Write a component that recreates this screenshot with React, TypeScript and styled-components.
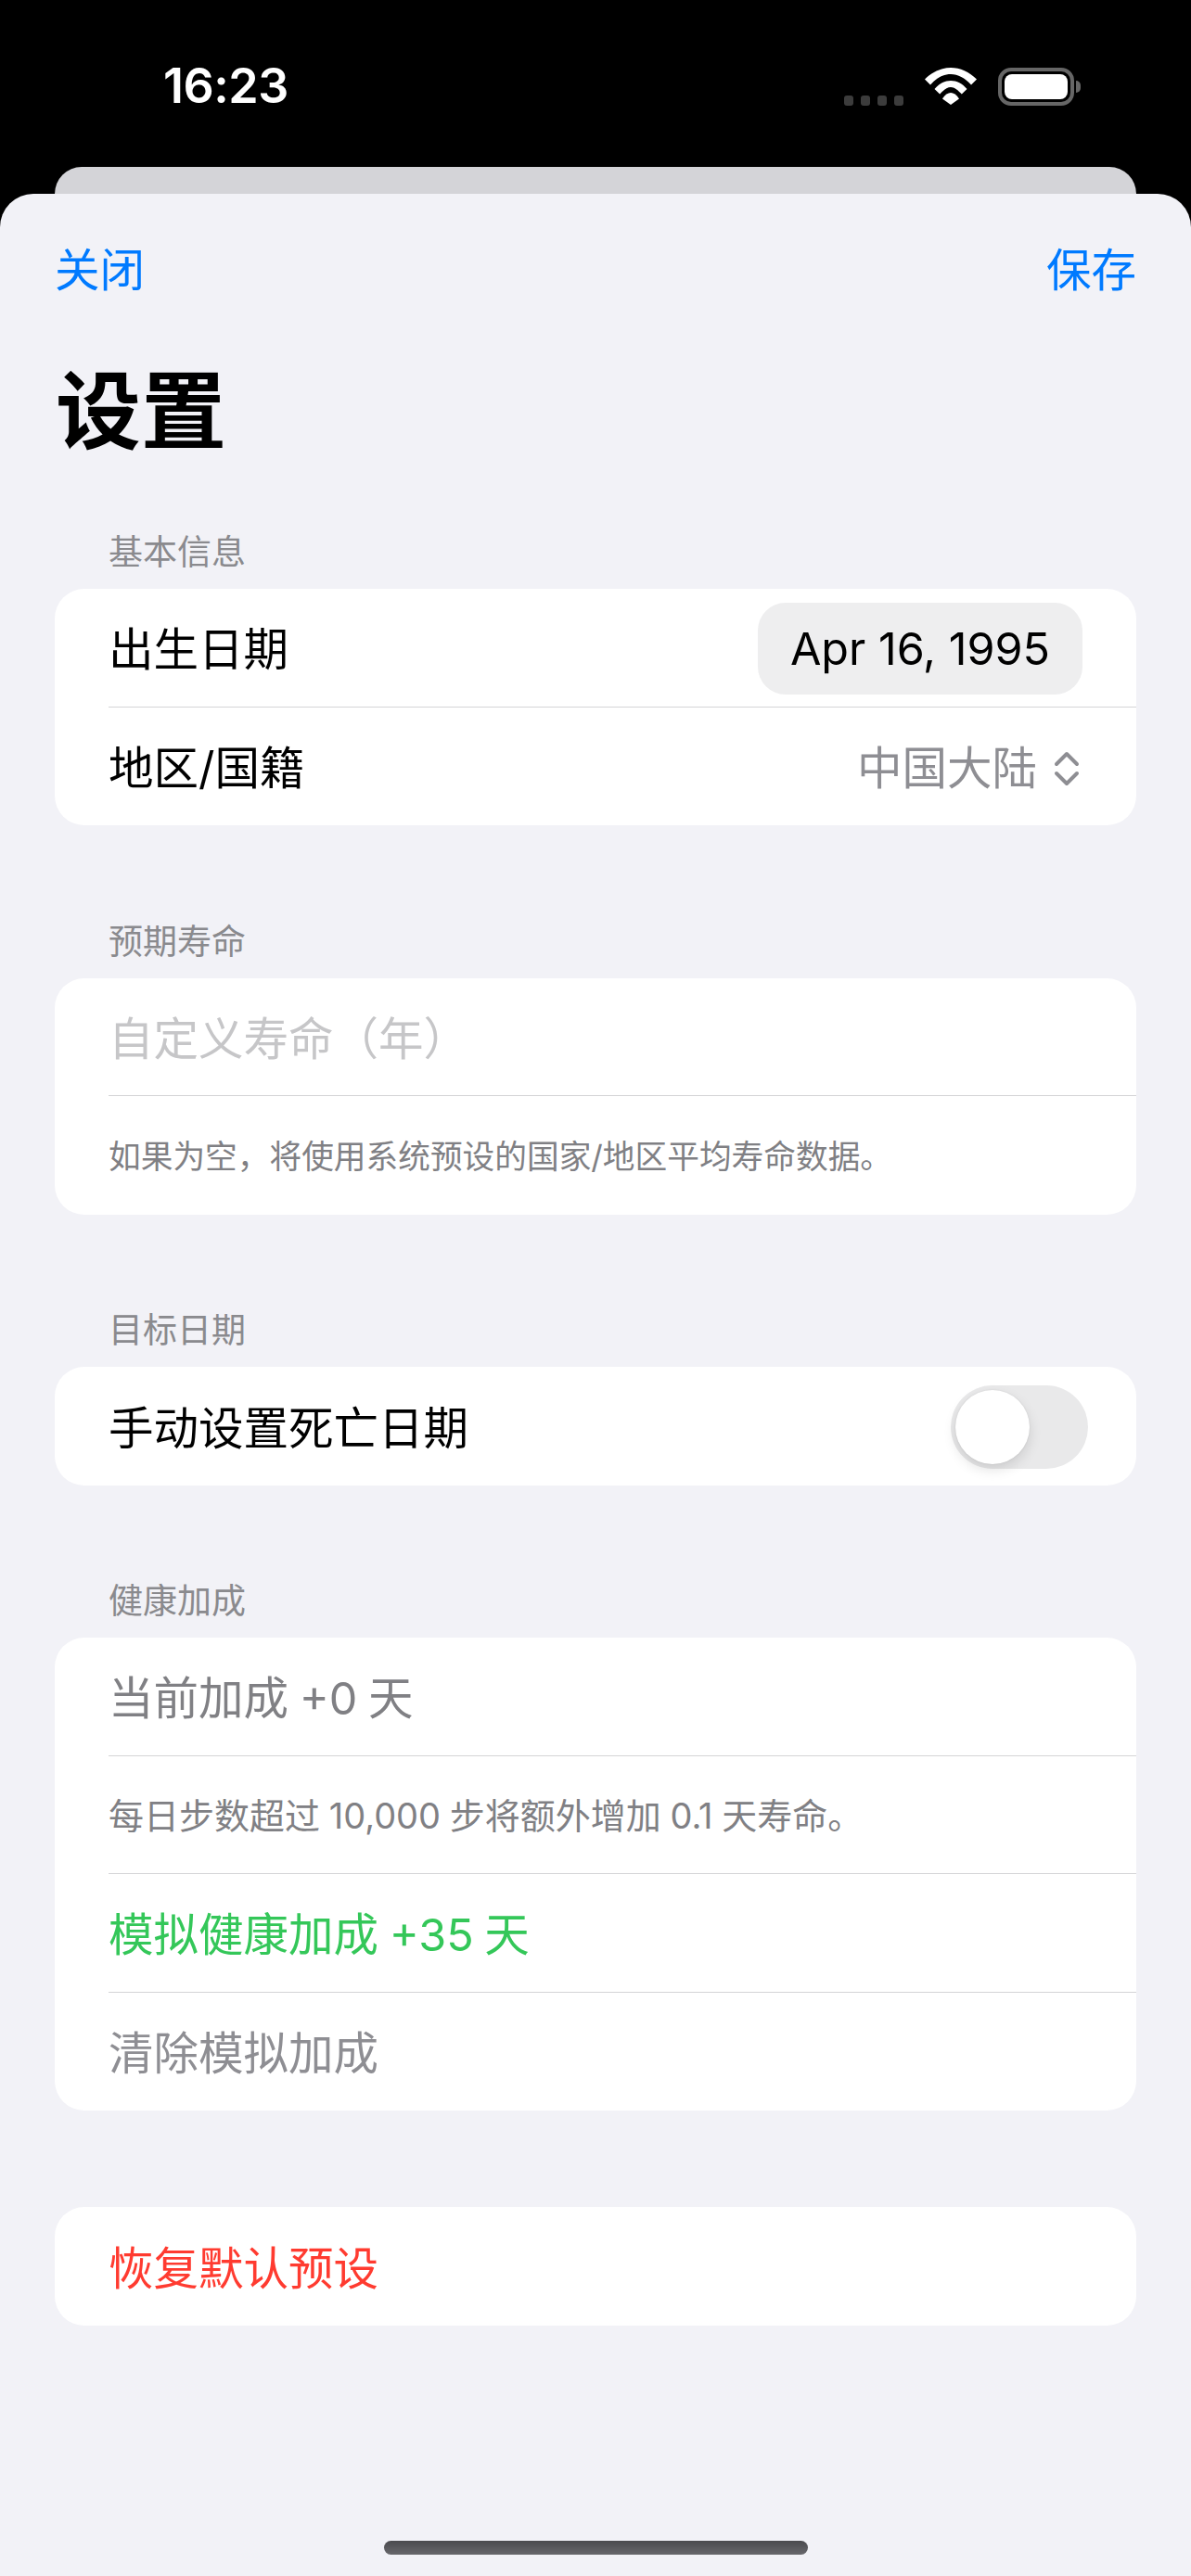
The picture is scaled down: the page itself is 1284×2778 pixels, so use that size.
import React from "react";
import styled, { createGlobalStyle } from "styled-components";

const GlobalStyle = createGlobalStyle`
  html, body {
    margin: 0;
    padding: 0;
    background: #000;
  }
  * {
    box-sizing: border-box;
  }
`;

const fontStack = `Inter, "Noto Sans CJK SC", sans-serif`;

const Page = styled.div`
  width: 1284px;
  height: 2778px;
  overflow: hidden;
  background: #000;
  font-family: ${fontStack};
`;

const StatusBar = styled.div`
  height: 180px;
  padding: 68px 126px 0 176px;
  display: flex;
  justify-content: space-between;
  align-items: flex-start;
  color: #fff;
`;

const Clock = styled.div`
  font-size: 52px;
  line-height: 50px;
  font-weight: 600;
  letter-spacing: -0.5px;
`;

const StatusIcons = styled.div`
  display: flex;
  align-items: flex-start;
  padding-top: 5px;
`;

const Dots = styled.div`
  display: flex;
  gap: 7.5px;
  margin: 30px 23px 0 0;
`;

const Dot = styled.span`
  width: 10.5px;
  height: 10.5px;
  border-radius: 3px;
  background: #3c3c3c;
`;

const Battery = styled.div`
  position: relative;
  width: 82px;
  height: 41px;
  margin-left: 23px;
  border: 4px solid #666;
  border-radius: 14px;
  padding: 3px;
  &::before {
    content: "";
    display: block;
    height: 100%;
    background: #fff;
    border-radius: 8px;
  }
  &::after {
    content: "";
    position: absolute;
    right: -11px;
    top: 10px;
    width: 5px;
    height: 13px;
    background: #666;
    border-radius: 0 6px 6px 0;
  }
`;

const BackSheet = styled.div`
  height: 29px;
  margin: 0 59px;
  background: #d4d4d8;
  border-radius: 30px 30px 0 0;
`;

const Sheet = styled.div`
  position: relative;
  height: 2569px;
  background: #f2f2f7;
  border-radius: 36px 36px 0 0;
  padding: 52px 59px 0;
`;

const NavBar = styled.div`
  display: flex;
  justify-content: space-between;
  height: 60px;
  padding-top: 1px;
`;

const NavButton = styled.span`
  color: #007aff;
  font-size: 48.5px;
  line-height: 60px;
`;

const Title = styled.h1`
  margin: 63px 0 0 1px;
  font-size: 92px;
  line-height: 120px;
  font-weight: 700;
  color: #000;
`;

const SectionLabel = styled.div`
  height: 50px;
  padding-left: 58px;
  margin-bottom: 14px;
  font-size: 37px;
  line-height: 50px;
  color: #8a8a8e;
`;

const Group = styled.section<{ $gap?: number }>`
  margin-top: ${({ $gap }) => $gap ?? 100.5}px;
`;

const Card = styled.div`
  background: #fff;
  border-radius: 32px;
  overflow: hidden;
`;

const Row = styled.div`
  height: 127.5px;
  margin-left: 58px;
  padding: 3px 59px 0 0;
  display: flex;
  align-items: center;
  justify-content: space-between;
  &:not(:last-child) {
    border-bottom: 1.5px solid #d4d4d6;
  }
`;

const RowText = styled.span<{ $color?: string }>`
  padding-top: 3px;
  font-size: 48.5px;
  line-height: 60px;
  word-spacing: -2px;
  color: ${({ $color }) => $color ?? "#000"};
`;

const Hint = styled.span<{ $size: number }>`
  font-size: ${({ $size }) => $size}px;
  line-height: 50px;
  word-spacing: -1px;
  color: #808084;
`;

const DateButton = styled.span`
  width: 350px;
  height: 99px;
  margin-right: -1px;
  display: flex;
  align-items: center;
  justify-content: center;
  background: #eeeeef;
  border-radius: 30px;
  font-size: 48.5px;
  color: #000;
`;

const Picker = styled.span`
  display: flex;
  align-items: center;
  gap: 18px;
  margin-right: 2px;
  padding-top: 3px;
  font-size: 48.5px;
  line-height: 60px;
  color: #8e8e93;
`;

const AmountInput = styled.input`
  width: 100%;
  border: 0;
  outline: 0;
  padding: 3px 0 0;
  background: transparent;
  font-family: ${fontStack};
  font-size: 48.5px;
  line-height: 60px;
  &::placeholder {
    color: #c6c6c8;
    opacity: 1;
  }
`;

const Toggle = styled.span`
  position: relative;
  width: 148px;
  height: 90px;
  margin-right: -7px;
  background: #e9e9ea;
  border-radius: 45px;
  &::after {
    content: "";
    position: absolute;
    left: 5px;
    top: 5px;
    width: 80px;
    height: 80px;
    background: #fff;
    border-radius: 50%;
    box-shadow: 0 6px 14px rgba(0, 0, 0, 0.12), 0 0 2px rgba(0, 0, 0, 0.1);
  }
`;

const HomeBar = styled.div`
  position: absolute;
  left: 414px;
  bottom: 23px;
  width: 457px;
  height: 15px;
  border-radius: 8px;
  background: linear-gradient(#4a4a4e, #68686c);
`;

const WifiIcon = () => (
  <svg width="56" height="40" viewBox="0 0 56 40" fill="#fff">
    <path d="M0 12.5C8 4.5 18 0 28 0s20 4.500 28 12.500L50 18.500C43 11 36 7 28 7S13 11 6 18.500Z" />
    <path d="M10.500 23C15.500 17 21.500 14 28 14s12.500 3 17.500 9L39.800 28.500C36 24.500 32 21 28 21s-8 3.500-11.800 7.500Z" />
    <path d="M19 33.500C22 29 25 27 28 27s6 2 9 6.500L28 40Z" />
  </svg>
);

const ChevronsIcon = () => (
  <svg width="28" height="38" viewBox="0 0 28 38" fill="none" stroke="#8e8e93" strokeWidth="4" strokeLinecap="round" strokeLinejoin="round">
    <path d="M3 14 14 3l11 11" />
    <path d="M3 24l11 11 11-11" />
  </svg>
);

export default function App() {
  return (
    <Page lang="zh-CN">
      <GlobalStyle />
      <StatusBar>
        <Clock>16:23</Clock>
        <StatusIcons>
          <Dots>
            <Dot />
            <Dot />
            <Dot />
            <Dot />
          </Dots>
          <WifiIcon />
          <Battery />
        </StatusIcons>
      </StatusBar>
      <BackSheet />
      <Sheet>
        <NavBar>
          <NavButton>关闭</NavButton>
          <NavButton>保存</NavButton>
        </NavBar>
        <Title>设置</Title>

        <Group $gap={67}>
          <SectionLabel>基本信息</SectionLabel>
          <Card>
            <Row>
              <RowText>出生日期</RowText>
              <DateButton>Apr 16, 1995</DateButton>
            </Row>
            <Row>
              <RowText>地区/国籍</RowText>
              <Picker>
                中国大陆
                <ChevronsIcon />
              </Picker>
            </Row>
          </Card>
        </Group>

        <Group>
          <SectionLabel>预期寿命</SectionLabel>
          <Card>
            <Row>
              <AmountInput placeholder="自定义寿命（年）" readOnly />
            </Row>
            <Row>
              <Hint $size={34.7}>如果为空，将使用系统预设的国家/地区平均寿命数据。</Hint>
            </Row>
          </Card>
        </Group>

        <Group>
          <SectionLabel>目标日期</SectionLabel>
          <Card>
            <Row>
              <RowText>手动设置死亡日期</RowText>
              <Toggle />
            </Row>
          </Card>
        </Group>

        <Group>
          <SectionLabel>健康加成</SectionLabel>
          <Card>
            <Row>
              <RowText $color="#808084">当前加成 +0 天</RowText>
            </Row>
            <Row>
              <Hint $size={38}>每日步数超过 10,000 步将额外增加 0.1 天寿命。</Hint>
            </Row>
            <Row>
              <RowText $color="#34c759">模拟健康加成 +35 天</RowText>
            </Row>
            <Row>
              <RowText $color="#8e8e93">清除模拟加成</RowText>
            </Row>
          </Card>
        </Group>

        <Group $gap={104}>
          <Card>
            <Row>
              <RowText $color="#ff3b30">恢复默认预设</RowText>
            </Row>
          </Card>
        </Group>
        <HomeBar />
      </Sheet>
    </Page>
  );
}
